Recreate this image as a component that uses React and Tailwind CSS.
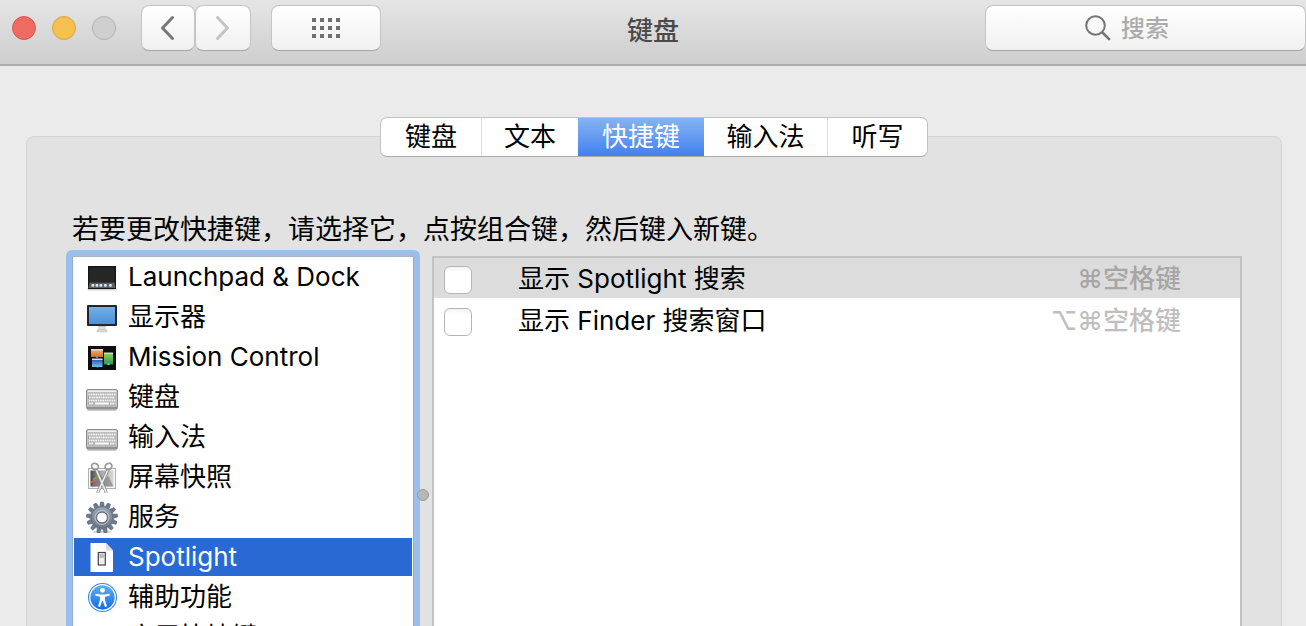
import { useState } from 'react'

function LaunchpadIcon() {
  return (
    <svg viewBox="0 0 32 32" className="size-8 shrink-0" aria-hidden="true">
      <rect x="1.500" y="27" width="29" height="2.500" rx="1" fill="#000" opacity=".18" />
      <rect x="2" y="5" width="28" height="23" fill="#161616" />
      <rect x="3.500" y="6.500" width="25" height="14.500" fill="#262626" />
      <path d="M3.500 21.500h25l1 5.500h-27z" fill="#5a6067" />
      {[5.5, 9.5, 13.5, 18, 23].map((x) => (
        <rect key={x} x={x} y="23" width="2.800" height="2.800" rx="1" fill="#dbe6ef" />
      ))}
    </svg>
  )
}

function DisplayIcon() {
  return (
    <svg viewBox="0 0 32 32" className="size-8 shrink-0" aria-hidden="true">
      <defs>
        <linearGradient id="screen" x1="0" y1="0" x2="0" y2="1">
          <stop offset="0" stopColor="#72b0e8" />
          <stop offset="1" stopColor="#4c90d6" />
        </linearGradient>
      </defs>
      <path d="M12.500 24h7l1 5h-9z" fill="#dcdcdc" />
      <path d="M12.500 24h7v1.500h-7z" fill="#a8a8a8" />
      <rect x="11" y="29" width="10" height="1.800" rx=".9" fill="#ececec" stroke="#aaa" strokeWidth=".6" />
      <rect x="1" y="4" width="30" height="21" rx="1" fill="#23252a" />
      <rect x="3" y="6" width="26" height="17" fill="url(#screen)" />
    </svg>
  )
}

function MissionControlIcon() {
  return (
    <svg viewBox="0 0 32 32" className="size-8 shrink-0" aria-hidden="true">
      <defs>
        <linearGradient id="orange" x1="0" y1="0" x2="0" y2="1">
          <stop offset="0" stopColor="#f2b06a" />
          <stop offset="1" stopColor="#dc6a1e" />
        </linearGradient>
        <linearGradient id="green" x1="0" y1="0" x2="0" y2="1">
          <stop offset="0" stopColor="#8fd07a" />
          <stop offset="1" stopColor="#2f9a2a" />
        </linearGradient>
        <linearGradient id="blue" x1="0" y1="0" x2="0" y2="1">
          <stop offset="0" stopColor="#2456b8" />
          <stop offset="1" stopColor="#7cc0f2" />
        </linearGradient>
      </defs>
      <rect x="2" y="5" width="28" height="24" fill="#0d0d0d" />
      <rect x="5" y="8.500" width="12" height="7.500" fill="url(#orange)" />
      <rect x="5" y="8" width="12" height="1.500" fill="#d9d9d9" />
      <rect x="18" y="12" width="9" height="11.500" fill="url(#green)" />
      <rect x="18" y="11.500" width="9" height="1.500" fill="#cfd8cb" />
      <rect x="6" y="18.500" width="10.500" height="7.500" fill="url(#blue)" />
      <rect x="6" y="17.500" width="10.500" height="1.500" fill="#d3dff0" />
      <circle cx="11" cy="15.800" r="1.300" fill="#4b9bea" />
      <circle cx="11.500" cy="25.300" r="1.300" fill="#58b8f0" />
      <circle cx="22.500" cy="23" r="1.300" fill="#58b8f0" />
    </svg>
  )
}

function KeyboardIcon() {
  return (
    <svg viewBox="0 0 32 32" className="size-8 shrink-0" aria-hidden="true">
      <rect x="1" y="27" width="30" height="3" rx="1.500" fill="#000" opacity=".18" />
      <rect x=".5" y="8.500" width="31" height="19.500" rx="1.500" fill="#c6c6c6" stroke="#8b8b8b" />
      <rect x="2" y="10" width="28" height="14.500" fill="#a8a8a8" />
      <rect x="2" y="9.500" width="28" height="1.800" fill="#f0f0f0" />
      <g stroke="#fafafa" strokeWidth="2.200" strokeDasharray="1.700 .6">
        <path d="M2.500 13.500h27" />
        <path d="M3.200 16.500h26" />
        <path d="M2.500 19.500h27" />
        <path d="M3 22.500h5M24 22.500h5.500" />
      </g>
      <path d="M9 22.500h14" stroke="#fafafa" strokeWidth="2.200" />
      <path d="M1 26.800h30" stroke="#8f8f8f" strokeWidth="2" />
    </svg>
  )
}

function ScreenshotIcon() {
  return (
    <svg viewBox="0 0 32 32" className="size-8 shrink-0" aria-hidden="true">
      <defs>
        <linearGradient id="photo" x1="0" y1="0" x2="1" y2="0">
          <stop offset="0" stopColor="#4a4a4a" />
          <stop offset=".45" stopColor="#a5a5a5" />
          <stop offset="1" stopColor="#d8d8d8" />
        </linearGradient>
      </defs>
      <rect x="2.500" y="7.500" width="27" height="20" fill="#f6f6f6" stroke="#b0b0b0" />
      <rect x="4.500" y="9.500" width="23" height="16" fill="url(#photo)" />
      <path d="M5 25.500l9-12 5 5 3-4 5.500 11z" fill="#7b7b7b" opacity=".6" />
      <path d="M5 21.500l6-3.500" stroke="#e0604c" strokeWidth="1.500" />
      <path d="M7 18.500l4-2.500" stroke="#72b65c" strokeWidth="1.200" />
      <g fill="none" stroke="#858585" strokeWidth="3">
        <path d="M10 8.500L20.500 32M22 8.500L11.500 32" />
      </g>
      <g fill="none" stroke="#efefef" strokeWidth="1.600">
        <path d="M10 8.500L20.500 32M22 8.500L11.500 32" />
      </g>
      <g fill="none" stroke="#999" strokeWidth="1.700">
        <ellipse cx="9" cy="5.500" rx="3.600" ry="3" transform="rotate(35 9 5.500)" />
        <ellipse cx="22.500" cy="5.500" rx="3.600" ry="3" transform="rotate(-35 22.500 5.500)" />
      </g>
    </svg>
  )
}

const TEETH = Array.from({ length: 13 }, (_, i) => (i * 360) / 13)

function GearIcon() {
  return (
    <svg viewBox="0 0 32 32" className="size-8 shrink-0" aria-hidden="true">
      <defs>
        <linearGradient id="gear" gradientUnits="userSpaceOnUse" x1="0" y1="3" x2="0" y2="29">
          <stop offset="0" stopColor="#a4adbb" />
          <stop offset="1" stopColor="#687386" />
        </linearGradient>
      </defs>
      <ellipse cx="16" cy="31" rx="10" ry="1" fill="#000" opacity=".2" />
      <g fill="#6f7a8d" stroke="#566075" strokeWidth=".6">
        {TEETH.map((a) => (
          <path key={a} d="M13.600 6.500l1-5.500h2.800l1 5.500z" transform={`rotate(${a} 16 16.500)`} />
        ))}
      </g>
      <circle cx="16" cy="16.500" r="10.800" fill="url(#gear)" stroke="#606b7e" strokeWidth=".8" />
      <circle cx="16" cy="16.500" r="7" fill="none" stroke="#c0c7d1" strokeWidth="1" />
      <circle cx="16" cy="16.500" r="5.400" fill="#fff" stroke="#566075" strokeWidth="1" />
    </svg>
  )
}

function DocumentIcon() {
  return (
    <svg viewBox="0 0 32 32" className="size-8 shrink-0" aria-hidden="true">
      <path d="M4.500 2h15.500l7 7.500v21.500h-22.500z" fill="#fff" />
      <path d="M20 2v7.500h7z" fill="#dcdcdc" />
      <rect x="12.300" y="11.500" width="7" height="12.500" fill="#f0f0f0" stroke="#444" strokeWidth="1.200" />
      <rect x="13.300" y="13" width="5" height="4" fill="#bdbdbd" />
    </svg>
  )
}

function AccessibilityIcon() {
  return (
    <svg viewBox="0 0 32 32" className="size-8 shrink-0" aria-hidden="true">
      <defs>
        <linearGradient id="access" x1="0" y1="0" x2="0" y2="1">
          <stop offset="0" stopColor="#5ab4f6" />
          <stop offset="1" stopColor="#1668e3" />
        </linearGradient>
      </defs>
      <circle cx="16.500" cy="16.500" r="14.500" fill="#3486de" />
      <circle cx="16.500" cy="16.500" r="12.800" fill="url(#access)" stroke="#fff" strokeWidth="1.300" />
      <circle cx="16.500" cy="9.300" r="2.400" fill="#fff" />
      <path d="M9.500 12.700l5 .8h4l5-.8.3 1.800-4.800 1.300v3.200l2 6.200-1.900.7-2.300-5.900h-.6l-2.300 5.900-1.900-.7 2-6.200v-3.200l-4.800-1.300z" fill="#fff" />
    </svg>
  )
}

function AppShortcutIcon() {
  return (
    <svg viewBox="0 0 32 32" className="size-8 shrink-0" aria-hidden="true">
      <path d="M16 6l11 22h-4.500L16 14 9.500 28H5z" fill="#4a8fd8" />
      <path d="M5 21h22v3H5z" fill="#d5a04a" />
    </svg>
  )
}

const CATEGORIES = [
  { name: 'Launchpad & Dock', Icon: LaunchpadIcon },
  { name: '显示器', Icon: DisplayIcon },
  { name: 'Mission Control', Icon: MissionControlIcon },
  { name: '键盘', Icon: KeyboardIcon },
  { name: '输入法', Icon: KeyboardIcon },
  { name: '屏幕快照', Icon: ScreenshotIcon },
  { name: '服务', Icon: GearIcon },
  { name: 'Spotlight', Icon: DocumentIcon },
  { name: '辅助功能', Icon: AccessibilityIcon },
  { name: '应用快捷键', Icon: AppShortcutIcon },
]

const TABS = [
  { name: '键盘', size: 'w-[100px]' },
  { name: '文本', size: 'w-[97px]' },
  { name: '快捷键', size: 'w-[126px]' },
  { name: '输入法', size: 'w-[123px]' },
  { name: '听写', size: 'w-[100px]' },
]

const SHORTCUTS = [
  { id: 'spotlight', name: '显示 Spotlight 搜索', keys: '⌘空格键' },
  { id: 'finder', name: '显示 Finder 搜索窗口', keys: '⌥⌘空格键' },
]

const BUTTON =
  'flex h-[46px] items-center justify-center rounded-lg border border-[#c4c4c4] border-b-[#a6a6a6] bg-linear-to-b from-white to-[#f0f0f0]'

function Toolbar() {
  return (
    <header className="grid h-[66px] grid-cols-[1fr_auto_1fr] items-start border-b-2 border-[#acacac] bg-linear-to-b from-[#e5e5e5] to-[#cecece] pt-[5px]">
      <div className="flex items-center pl-3">
        <div className="flex gap-4">
          <button aria-label="关闭" className="size-6 rounded-full border border-[#d9574d] bg-[#ed6b60]" />
          <button aria-label="最小化" className="size-6 rounded-full border border-[#dba043] bg-[#f6c04f]" />
          <button aria-label="缩放" disabled className="size-6 rounded-full border border-[#b0b0b0] bg-[#cfcfcf]" />
        </div>
        <div className="ml-[25px] flex">
          <button aria-label="后退" className={`${BUTTON} w-[54px]`}>
            <svg viewBox="0 0 16 26" className="h-[26px] w-4" fill="none" stroke="#777" strokeWidth="3" strokeLinecap="round" strokeLinejoin="round">
              <path d="M12.500 2.500L2.500 13l10 10.500" />
            </svg>
          </button>
          <button aria-label="前进" disabled className={`${BUTTON} w-14`}>
            <svg viewBox="0 0 16 26" className="h-[26px] w-4" fill="none" stroke="#c3c3c3" strokeWidth="3" strokeLinecap="round" strokeLinejoin="round">
              <path d="M2.500 2.500l10 10.500-10 10.500" />
            </svg>
          </button>
        </div>
        <button aria-label="显示全部" className={`${BUTTON} ml-5 w-[110px]`}>
          <svg viewBox="0 0 28 20" className="h-5 w-7" fill="#707070">
            {[0, 8, 16].map((y) => [0, 8, 16, 24].map((x) => <rect key={`${x}-${y}`} x={x} y={y} width="4" height="4" />))}
          </svg>
        </button>
      </div>
      <h1 className="pt-[7px] text-[26px] leading-[38px] font-medium text-[#4a4a4a]">键盘</h1>
      <label className={`${BUTTON} w-[321px] justify-self-end gap-[10px] pl-[99px]`}>
        <svg viewBox="0 0 26 26" className="size-[26px] shrink-0" fill="none" stroke="#757575" strokeWidth="2">
          <circle cx="10.500" cy="10.500" r="9.300" />
          <path d="M17.500 17.500l7.300 7.300" strokeWidth="2.600" />
        </svg>
        <input
          type="search"
          aria-label="搜索"
          placeholder="搜索"
          className="w-full min-w-0 bg-transparent pt-[2px] text-[24px] leading-9 font-medium outline-none placeholder:text-[#ababab]"
        />
      </label>
    </header>
  )
}

function Tabs({ active, onSelect }) {
  return (
    <div role="tablist" className="mx-auto -mt-5 flex h-10 w-fit overflow-hidden rounded-[7px] border border-[#c2c2c2] border-b-[#a9a9a9] bg-white">
      {TABS.map(({ name, size }, i) => {
        const selected = name === active
        const divided = i === 1 || i === 4
        return (
          <button
            key={name}
            role="tab"
            aria-selected={selected}
            onClick={() => onSelect(name)}
            className={`${size} text-[26px] leading-[38px] ${divided ? 'border-l border-[#dedede]' : ''} ${
              selected ? 'bg-linear-to-b from-[#86b3f1] to-[#4280ee] text-white' : 'text-black'
            }`}
          >
            {name}
          </button>
        )
      })}
    </div>
  )
}

export default function App() {
  const [tab, setTab] = useState('快捷键')
  const [category, setCategory] = useState('Spotlight')
  return (
    <div className="h-screen overflow-hidden bg-[#ebebeb] font-['Inter','Noto_Sans_CJK_SC','DejaVu_Sans',sans-serif] text-[26px] text-black">
      <Toolbar />
      <main className="mt-[70px] mr-6 ml-[26px] rounded-t-lg border border-[#d4d4d4] bg-[#e2e2e2] px-[39px] pb-10">
        <Tabs active={tab} onSelect={setTab} />
        <p className="mt-[53px] pl-[6px] text-[27px] leading-10">若要更改快捷键，请选择它，点按组合键，然后键入新键。</p>
        <div className="flex h-[490px]">
          <nav className="w-[354px] shrink-0 rounded-[6px] bg-[#9abfeb] p-[6px]">
            <ul className="flex h-full flex-col gap-[2px] overflow-hidden border border-[#8fadd2] border-t-[#a5b6cb] bg-white p-px">
              {CATEGORIES.map(({ name, Icon }) => (
                <li key={name}>
                  <button
                    onClick={() => setCategory(name)}
                    className={`flex h-[38px] w-full items-center gap-[10px] pl-3 text-left leading-[38px] ${
                      name === category ? 'bg-[#2869d3] text-white' : ''
                    }`}
                  >
                    <Icon />
                    {name}
                  </button>
                </li>
              ))}
            </ul>
          </nav>
          <div role="separator" aria-orientation="vertical" className="relative flex w-3 shrink-0 items-center">
            <span className="absolute -left-[3px] size-3 rounded-full border border-[#999] bg-[#b7b7b7]" />
          </div>
          <ul className="mt-[6px] flex min-w-0 flex-1 flex-col gap-[2px] border-2 border-[#c3c3c3] bg-white">
            {SHORTCUTS.map(({ id, name, keys }, i) => (
              <li key={id} className={`flex h-10 items-center pr-[59px] pl-[10px] ${i === 0 ? 'bg-[#dcdcdc]' : ''}`}>
                <input
                  id={id}
                  type="checkbox"
                  className="mt-1 size-7 appearance-none rounded-md border border-[#b5b5b5] bg-white bg-linear-to-b from-[#f3f3f3] to-white to-20% checked:bg-[#4280ee]"
                />
                <label htmlFor={id} className="ml-[46px] flex-1 pt-[2px] leading-[38px]">
                  {name}
                </label>
                <kbd className={`pt-[2px] font-['Inter','Noto_Sans_CJK_SC','DejaVu_Sans',sans-serif] leading-[38px] font-medium ${i === 0 ? 'text-[#a6a6a6]' : 'text-[#bfbfbf]'}`}>
                  {keys}
                </kbd>
              </li>
            ))}
          </ul>
        </div>
      </main>
    </div>
  )
}
